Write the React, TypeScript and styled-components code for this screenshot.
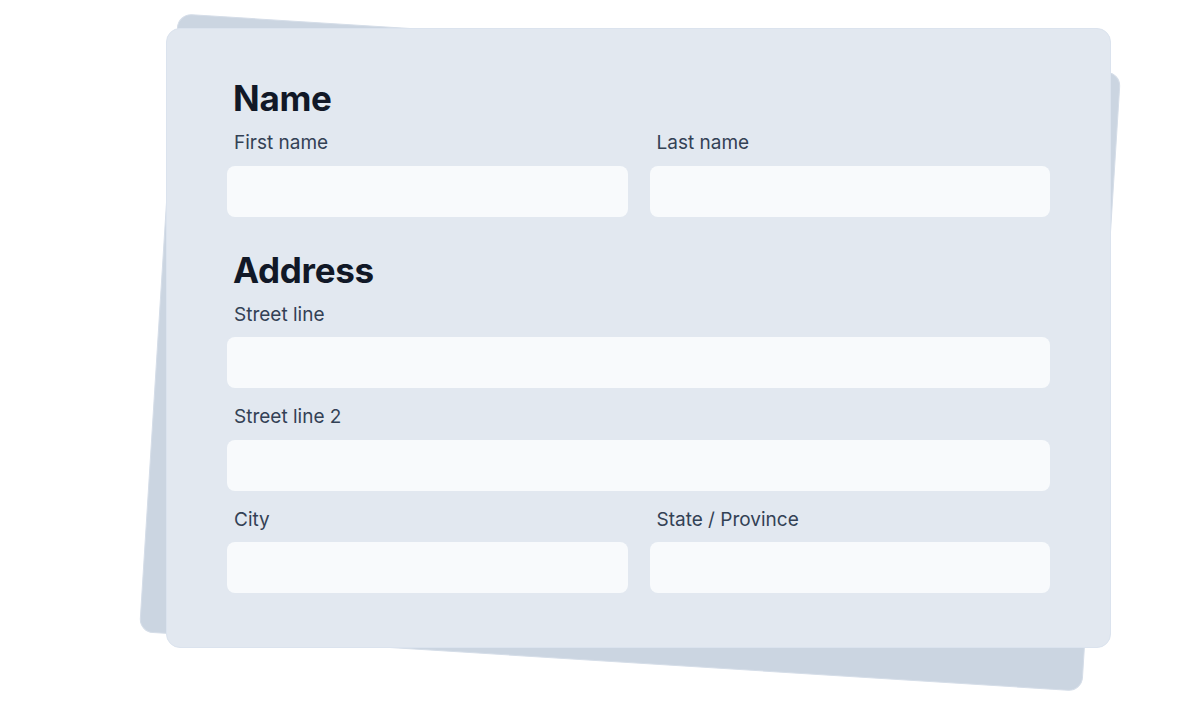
import React from "react";
import styled, { createGlobalStyle } from "styled-components";

const GlobalStyle = createGlobalStyle`
    html, body {
        margin: 0;
        padding: 0;
        background: #ffffff;
        font-family: Inter, "Noto Sans", sans-serif;
    }
    * { box-sizing: border-box; }
`

const Page = styled.div`
    width: 1200px;
    height: 706px;
    padding: 28px 0 0 166px;
    overflow: hidden;
`

const Stack = styled.div`
    position: relative;
    width: 945px;
    height: 620px;
`

// the tilted sheet lying under the form
const Backdrop = styled.div`
    position: absolute;
    inset: 0;
    background-color: #cbd5e1;
    border: 1px solid #d5dde8;
    border-radius: 14px;
    transform: translate(-8.5px, 14.5px) rotate(3.6deg);
`

const Card = styled.form`
    position: relative;
    display: flex;
    flex-direction: column;
    gap: 33px;
    width: 100%;
    height: 100%;
    padding: 49px 60px 52px 60px;
    background-color: #e2e8f0;
    border: 1px solid #dbe3ee;
    border-radius: 14px;
`

const Section = styled.section`
    display: flex;
    flex-direction: column;
    gap: 10px;
`

const Heading = styled.h2`
    margin: 0;
    padding-left: 6px;
    font-size: 35px;
    line-height: 40px;
    font-weight: 700;
    letter-spacing: -0.3px;
    color: #111827;
`

const Fields = styled.div`
    display: flex;
    flex-direction: column;
    gap: 14px;
`

const Row = styled.div<{ $cols: number }>`
    display: grid;
    grid-template-columns: repeat(${p => p.$cols}, 1fr);
    column-gap: 22px;
`

const Field = styled.label`
    display: flex;
    flex-direction: column;
    gap: 8.5px;
`

const LabelText = styled.span`
    padding-left: 7px;
    padding-top: 1px;
    font-size: 19px;
    line-height: 28px;
    font-weight: 400;
    color: #334155;
`

const Input = styled.input`
    height: 51px;
    width: 100%;
    border: none;
    outline: none;
    border-radius: 8px;
    background-color: #f8fafc;
    padding: 0 14px;
    font-family: inherit;
    font-size: 18px;
    color: #0f172a;
`

const TextField = (props: { label: string }) => {
    return <Field>
        <LabelText>{props.label}</LabelText>
        <Input type="text" />
    </Field>
}

export default function App() {
    return <>
        <GlobalStyle />
        <Page>
            <Stack>
                <Backdrop />
                <Card onSubmit={e => e.preventDefault()}>
                    <Section>
                        <Heading>Name</Heading>
                        <Fields>
                            <Row $cols={2}>
                                <TextField label="First name" />
                                <TextField label="Last name" />
                            </Row>
                        </Fields>
                    </Section>
                    <Section>
                        <Heading>Address</Heading>
                        <Fields>
                            <TextField label="Street line" />
                            <TextField label="Street line 2" />
                            <Row $cols={2}>
                                <TextField label="City" />
                                <TextField label="State / Province" />
                            </Row>
                        </Fields>
                    </Section>
                </Card>
            </Stack>
        </Page>
    </>
}
